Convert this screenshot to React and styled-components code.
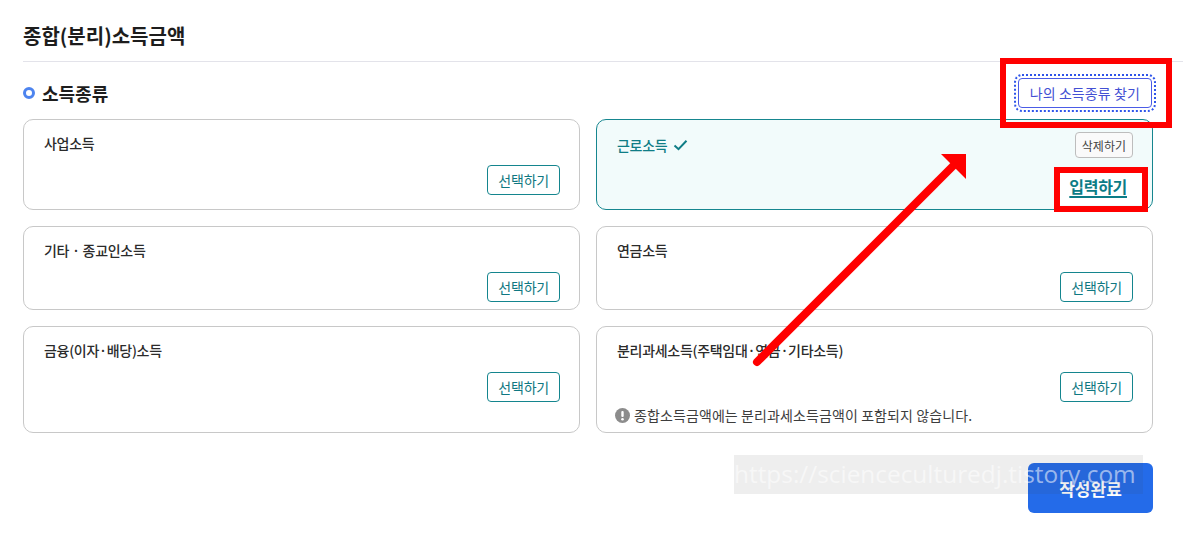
import React from "react";
import styled, { createGlobalStyle } from "styled-components";

const Global = createGlobalStyle`
  html, body { margin: 0; padding: 0; background: #fff; }
  body { font-family: "Noto Sans CJK KR", "Noto Sans", sans-serif; color: #222; }
  * { box-sizing: border-box; }
`;

const Page = styled.div`
  position: relative;
  width: 1183px;
  height: 534px;
  padding-left: 23px;
  overflow: hidden;
`;

const Header = styled.div`
  padding: 21px 0 11px;
  border-bottom: 1px solid #e3e3ea;
`;

const Title = styled.h2`
  margin: 0;
  font-size: 20px;
  line-height: 29px;
  font-weight: 700;
  letter-spacing: 0;
  color: #1d1d1d;
`;

const Content = styled.div`
  width: 1130px;
`;

const SectionHead = styled.div`
  display: flex;
  align-items: center;
  justify-content: space-between;
  height: 30px;
  margin: 16px 0 11px;
`;

const SectionLabel = styled.div`
  display: flex;
  align-items: center;
  gap: 7px;
  font-size: 18px;
  font-weight: 700;
  letter-spacing: 0;
  color: #1d1d1d;
`;

const Bullet = styled.span`
  width: 12px;
  height: 12px;
  border-radius: 50%;
  border: 3px solid #4d84ef;
  background: #fff;
`;

const FindButton = styled.button`
  height: 30px;
  padding: 0 11px;
  border: 1px solid #4b5ce6;
  border-radius: 4px;
  background: #fff;
  color: #4350d4;
  font-family: inherit;
  font-size: 14px;
  letter-spacing: 0.1px;
  outline: 2px dotted #2f55ea;
  outline-offset: 2px;
  margin-right: 1px;
`;

const Grid = styled.div`
  display: grid;
  grid-template-columns: 557px 557px;
  gap: 16px;
`;

const Card = styled.div`
  display: flex;
  flex-direction: column;
  border: 1px solid ${(p) => (p.$selected ? "#16868f" : "#c8c8c8")};
  background: ${(p) => (p.$selected ? "#f2fbfb" : "#fff")};
  border-radius: 10px;
  padding: ${(p) => (p.$selected ? "12px 19px 4px 20px" : "13px 19px 7px 20px")};
`;

const CardHead = styled.div`
  display: flex;
  align-items: center;
  justify-content: space-between;
  min-height: ${(p) => (p.$tall ? "26px" : "20px")};
`;

const CardTitle = styled.div`
  display: flex;
  align-items: center;
  gap: 6px;
  font-size: 14px;
  line-height: 20px;
  font-weight: 500;
  letter-spacing: -0.3px;
  color: ${(p) => (p.$selected ? "#0f7d86" : "#2b2b2b")};
`;

const ButtonRow = styled.div`
  display: flex;
  justify-content: flex-end;
  margin-top: 12px;
`;

const SelectButton = styled.button`
  height: 30px;
  padding: 0 10px;
  border: 1px solid #14858e;
  border-radius: 4px;
  background: #fff;
  color: #0f7882;
  font-family: inherit;
  font-size: 14px;
  letter-spacing: -0.2px;
`;

const DeleteButton = styled.button`
  height: 26px;
  padding: 0 6px;
  border: 1px solid #bdbdbd;
  border-radius: 4px;
  background: #fafafa;
  color: #444;
  font-family: inherit;
  font-size: 12px;
  letter-spacing: 0;
`;

const LinkRow = styled.div`
  display: flex;
  justify-content: flex-end;
  margin-top: 14px;
  margin-right: -9px;
`;

const InputLink = styled.a`
  display: inline-block;
  background: #fff;
  padding: 3px 15px 8px 9px;
  font-size: 16px;
  line-height: 22px;
  font-weight: 700;
  letter-spacing: -0.3px;
  color: #0c7c86;
  text-decoration: underline;
  text-decoration-thickness: 1.5px;
  text-underline-offset: 3px;
`;

const Note = styled.div`
  display: flex;
  align-items: center;
  gap: 4px;
  margin-top: 3px;
  margin-left: -2px;
  font-size: 14px;
  line-height: 20px;
  letter-spacing: 0.1px;
  color: #3d3d3d;
`;

const Footer = styled.div`
  display: flex;
  justify-content: flex-end;
  margin-top: 30px;
`;

const CompleteButton = styled.button`
  width: 125px;
  height: 50px;
  border: none;
  border-radius: 6px;
  background: #246be9;
  color: #fff;
  font-family: inherit;
  font-size: 17px;
  font-weight: 700;
  letter-spacing: 0;
`;

const Annotation = styled.div`
  position: absolute;
  left: ${(p) => p.$x}px;
  top: ${(p) => p.$y}px;
  width: ${(p) => p.$w}px;
  height: ${(p) => p.$h}px;
  border: 6px solid #ff0000;
  pointer-events: none;
`;

const ArrowLayer = styled.svg`
  position: absolute;
  left: 0;
  top: 0;
  pointer-events: none;
`;

const Watermark = styled.div`
  position: absolute;
  left: 734px;
  top: 455px;
  width: 409px;
  height: 39px;
  background: rgba(70, 70, 70, 0.09);
  color: rgba(255, 255, 255, 0.55);
  font-family: "Open Sans", "Noto Sans", sans-serif;
  font-size: 24.4px;
  line-height: 38px;
  white-space: nowrap;
  letter-spacing: 0px;
`;

const CheckIcon = () => (
  <svg width="15" height="12" viewBox="0 0 15 12">
    <path d="M1.5 6.5 L5.5 10.2 L13.5 1.8" fill="none" stroke="#0f7d86" strokeWidth="2" />
  </svg>
);

const AlertIcon = () => (
  <svg width="15" height="15" viewBox="0 0 15 15">
    <circle cx="7.5" cy="7.5" r="7.5" fill="#8c8c8c" />
    <rect x="6.3" y="3" width="2.4" height="6" rx="1" fill="#fff" />
    <circle cx="7.5" cy="11.2" r="1.3" fill="#fff" />
  </svg>
);

const items = [
  { title: "사업소득" },
  { title: "근로소득", selected: true },
  { title: "기타 · 종교인소득" },
  { title: "연금소득" },
  { title: "금융(이자·배당)소득" },
  { title: "분리과세소득(주택임대·연금·기타소득)", note: "종합소득금액에는 분리과세소득금액이 포함되지 않습니다." },
];

export default function App() {
  return (
    <>
      <Global />
      <Page>
        <Header>
          <Title>종합(분리)소득금액</Title>
        </Header>
        <Content>
          <SectionHead>
            <SectionLabel>
              <Bullet />
              소득종류
            </SectionLabel>
            <FindButton>나의 소득종류 찾기</FindButton>
          </SectionHead>
          <Grid>
            {items.map((it) =>
              it.selected ? (
                <Card key={it.title} $selected>
                  <CardHead $tall>
                    <CardTitle $selected>
                      {it.title}
                      <CheckIcon />
                    </CardTitle>
                    <DeleteButton>삭제하기</DeleteButton>
                  </CardHead>
                  <LinkRow>
                    <InputLink>입력하기</InputLink>
                  </LinkRow>
                </Card>
              ) : (
                <Card key={it.title}>
                  <CardHead>
                    <CardTitle>{it.title}</CardTitle>
                  </CardHead>
                  <ButtonRow>
                    <SelectButton>선택하기</SelectButton>
                  </ButtonRow>
                  {it.note && (
                    <Note>
                      <AlertIcon />
                      {it.note}
                    </Note>
                  )}
                </Card>
              )
            )}
          </Grid>
          <Footer>
            <CompleteButton>작성완료</CompleteButton>
          </Footer>
        </Content>
        <Watermark>https://scienceculturedj.tistory.com</Watermark>
        <Annotation $x={1000} $y={58} $w={172} $h={70} />
        <Annotation $x={1054} $y={167} $w={94} $h={45} />
        <ArrowLayer width="1183" height="534" viewBox="0 0 1183 534">
          <line x1="757" y1="362" x2="953" y2="166" stroke="#ff0000" strokeWidth="8" strokeLinecap="round" />
          <polygon points="966,154 941,154 966,179" fill="#ff0000" />
        </ArrowLayer>
      </Page>
    </>
  );
}
